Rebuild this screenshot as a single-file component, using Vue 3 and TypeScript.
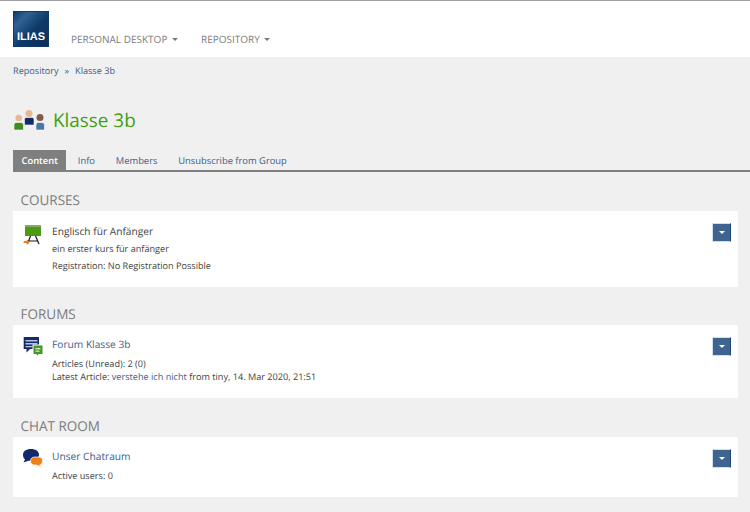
<script setup lang="ts">
const tabs = ['Info', 'Members', 'Unsubscribe from Group']
</script>

<template>
  <div class="page">
    <header class="top">
      <div class="logo"><span>ILIAS</span></div>
      <nav class="mainnav">
        <span class="navitem">PERSONAL DESKTOP <i class="caret"></i></span>
        <span class="navitem">REPOSITORY <i class="caret"></i></span>
      </nav>
    </header>
    <div class="crumbs"><a>Repository</a><span class="sep">»</span><a>Klasse 3b</a></div>
    <div class="title">
      <svg width="32" height="22" viewBox="0 0 32 22">
        <circle cx="5.700" cy="9" r="3.300" fill="#e8b794" />
        <path d="M1 21v-5c0-1.500 1-2.500 2.500-2.500h4.500c1.500 0 2.500 1 2.500 2.500v5z" fill="#3f8f1f" stroke="#fff" stroke-width=".6" />
        <circle cx="16" cy="4.500" r="3.500" fill="#e8b794" />
        <path d="M11.500 16v-5.500C11.500 9 12.500 8.500 14 8.500h4.500c1.500 0 2.500 .5 2.500 2V16z" fill="#12296b" stroke="#fff" stroke-width=".6" />
        <circle cx="27" cy="8.500" r="3.500" fill="#7d5d4e" />
        <path d="M23 21v-5c0-1.500 1-2.500 2.500-2.500H29c1.500 0 2.500 1 2.500 2.500v5z" fill="#4a76a8" stroke="#fff" stroke-width=".6" />
      </svg>
      <h1>Klasse 3b</h1>
    </div>
    <div class="tabs">
      <span class="tab active">Content</span>
      <span v-for="t in tabs" :key="t" class="tab">{{ t }}</span>
    </div>

    <section class="block b1">
      <h2>COURSES</h2>
      <div class="card course">
        <svg class="icon" width="20" height="21" viewBox="0 0 20 21">
          <path d="M2 1h16v11H2z" fill="#4f9a14" />
          <path d="M2 1h16v2H2z" fill="#86ad5a" />
          <path d="M7.500 12 4.500 20M12.500 12l3.500 8M5.500 17h9.500" stroke="#1d1512" stroke-width="1.200" fill="none" />
          <path d="M.7 17h3v-1.800l3 2.800-3 2.800V19h-3z" fill="#f27f16" />
        </svg>
        <div class="body">
          <div class="name plain">Englisch für Anfänger</div>
          <div class="line first">ein erster kurs für anfänger</div>
          <div class="line second">Registration: No Registration Possible</div>
        </div>
        <button class="menu"><i></i></button>
      </div>
    </section>

    <section class="block b2">
      <h2>FORUMS</h2>
      <div class="card forum">
        <svg class="icon" width="20" height="20" viewBox="0 0 20 20">
          <path d="M.7 0h15.300v12H7l-3.500 3.500V12H.7z" fill="#12296b" />
          <path d="M2.500 3h12v1.400h-12zM2.500 6h12v1.400h-12zM2.500 9h7v1.200h-7z" fill="#b9c4de" />
          <path d="M9.500 7.500h11v10.500h-4.500l-1.500 2-1-2h-4z" fill="#fff" />
          <path d="M10.500 8.500h9v8.500h-4l-1.200 1.800-.8-1.800h-3z" fill="#3f9a1d" />
          <path d="M12.500 11h5v1.200h-5zM12.500 13.500h4v1.200h-4z" fill="#dcecd0" />
        </svg>
        <div class="body">
          <a class="name">Forum Klasse 3b</a>
          <div class="line gap">Articles (Unread): 2 (0)</div>
          <div class="line">Latest Article: <a>verstehe ich nicht</a> from tiny, 14. Mar 2020, 21:51</div>
        </div>
        <button class="menu"><i></i></button>
      </div>
    </section>

    <section class="block b3">
      <h2>CHAT ROOM</h2>
      <div class="card chat">
        <svg class="icon" width="20" height="19" viewBox="0 0 20 19">
          <path d="M8 0c5 0 8 2.300 8 5.800s-3 6-8 6H5.500L.5 13.500 2 10.500C.8 9.500 0 7.800 0 5.800 0 2.300 3 0 8 0z" fill="#12296b" />
          <path d="M11.500 8h4.500c2.500 0 3.500 1.700 3.500 3.900S18 16 16.500 16l2 2.500-5-2.500h-2c-2.500 0-4-1.500-4-4s1.500-4 4-4z" fill="#f27f16" stroke="#fff" stroke-width=".7" />
        </svg>
        <div class="body">
          <a class="name">Unser Chatraum</a>
          <div class="line gap">Active users: 0</div>
        </div>
        <button class="menu"><i></i></button>
      </div>
    </section>
  </div>
</template>

<style>
html, body { margin: 0; background: #f0f0f0; }
</style>

<style scoped>
.page {
  width: 750px;
  height: 512px;
  overflow: hidden;
  background: #f0f0f0;
  font-family: "Open Sans", "Liberation Sans", sans-serif;
  font-size: 9.150px;
  color: #434343;
  text-rendering: geometricPrecision;
}
a { color: #3a5d8c; }
.top {
  height: 56px;
  background: #fff;
  border-top: 1px solid #a0a0a0;
  display: flex;
}
.logo {
  width: 36px;
  height: 36px;
  margin: 10px 0 0 13px;
  background: linear-gradient(135deg, #0f3a68 0%, #2f6294 22%, #0f3a68 55%, #0a2f5a 100%);
  display: flex;
  align-items: flex-end;
  justify-content: center;
  box-sizing: border-box;
  border: 1px solid #0f3a68;
  padding-bottom: 2px;
}
.logo span {
  font-family: "Liberation Sans", sans-serif;
  font-weight: 700;
  font-size: 11px;
  color: #fff;
  line-height: 13px;
}
.mainnav {
  display: flex;
  gap: 23px;
  margin-left: 22px;
  padding-top: 31px;
  font-size: 10px;
  line-height: 15px;
  color: #7b7b7b;
}
.navitem { white-space: nowrap; }
.caret {
  display: inline-block;
  width: 0;
  height: 0;
  margin-left: 2px;
  vertical-align: 2px;
  border-left: 3px solid transparent;
  border-right: 3px solid transparent;
  border-top: 3px solid #7b7b7b;
}
.crumbs {
  padding: 7px 0 0 13px;
  line-height: 14px;
  color: #3a5d8c;
}
.sep { margin: 0 6px; }
.title {
  display: flex;
  align-items: center;
  margin: 28px 0 0 13px;
  gap: 8px;
  height: 28px;
}
h1 {
  margin: 0;
  font-size: 18.900px;
  font-weight: 400;
  color: #409f10;
  line-height: 30px;
}
.tabs {
  display: flex;
  margin: 16px 0 0 13px;
  height: 20px;
  border-bottom: 2px solid #7f7f7f;
}
.tab {
  padding: 0 10.400px;
  line-height: 21px;
  color: #3a5d8c;
  white-space: nowrap;
  font-size: 9.400px;
}
.tab.active {
  background: #7f7f7f;
  color: #fff;
  padding: 0 8.500px;
  margin-right: 1px;
  font-weight: 600;
}
.block { margin-left: 13px; width: 725px; }
h2 {
  margin: 0;
  padding-left: 7.500px;
  font-size: 13.500px;
  font-weight: 400;
  color: #7b7b7b;
  line-height: 20px;
}
.b1 { margin-top: 18px; }
.b2 { margin-top: 17.500px; }
.b3 { margin-top: 18px; }
.card {
  background: #fff;
  margin-top: 1px;
  position: relative;
  display: flex;
  padding: 12px 0 0 10px;
  box-sizing: border-box;
}
.course { height: 75.500px; padding-top: 13px; }
.forum { height: 73px; }
.chat { height: 60px; }
.icon { flex: none; }
.body { margin-left: 9px; }
.name { display: block; font-size: 10.200px; line-height: 14px; color: #3a5d8c; }
.name.plain { color: #434343; }
.line { line-height: 13px; color: #434343; white-space: nowrap; }
.first { margin-top: 4px; }
.second { margin-top: 3.500px; }
.gap { margin-top: 6px; }
.menu {
  position: absolute;
  top: 12px;
  right: 7px;
  width: 19px;
  height: 19px;
  padding: 0;
  background: #3f6490;
  border: 1px solid #d5dde8;
  border-right: 1px solid #1d4a7c;
  display: flex;
  align-items: center;
  justify-content: center;
}
.menu i {
  width: 0;
  height: 0;
  border-left: 3.500px solid transparent;
  border-right: 3.500px solid transparent;
  border-top: 3.500px solid #fff;
}
</style>
